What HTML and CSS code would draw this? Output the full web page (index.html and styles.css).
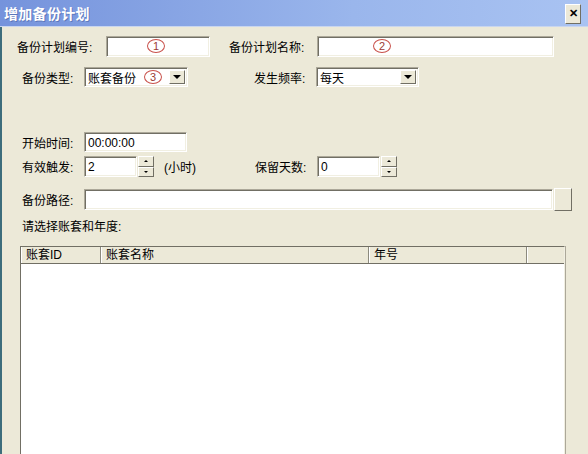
FILE: index.html
```html
<!DOCTYPE html>
<html lang="zh-CN">
<head>
  <meta charset="UTF-8">
  <title>增加备份计划</title>
  <link rel="stylesheet" href="styles.css">
</head>
<body>
  <div class="dialog">
    <div class="titlebar">
      <span class="title">增加备份计划</span>
      <span class="close-btn">&#x2715;</span>
    </div>

    <div class="form">
      <!-- row 1 -->
      <div class="row row-1">
        <span class="label w89">备份计划编号:</span>
        <div class="field w104"><span class="mark">1</span></div>
        <span class="label w88 ml19">备份计划名称:</span>
        <div class="field w237"><span class="mark mark-2">2</span></div>
      </div>

      <!-- row 2 -->
      <div class="row row-2">
        <span class="label w62">备份类型:</span>
        <div class="field combo w104">
          <span class="value">账套备份</span>
          <span class="mark mark-3">3</span>
          <span class="drop"><span class="tri"></span></span>
        </div>
        <span class="label w62 ml66">发生频率:</span>
        <div class="field combo w103">
          <span class="value">每天</span>
          <span class="drop"><span class="tri"></span></span>
        </div>
      </div>

      <!-- row 3 -->
      <div class="row row-3">
        <span class="label w62">开始时间:</span>
        <div class="field w103"><span class="value">00:00:00</span></div>
      </div>

      <!-- row 4 -->
      <div class="row row-4">
        <span class="label w62">有效触发:</span>
        <div class="field w53"><span class="value">2</span></div>
        <div class="spin">
          <span class="spin-btn"><span class="tri up"></span></span>
          <span class="spin-btn"><span class="tri"></span></span>
        </div>
        <span class="label ml10 w91">(小时)</span>
        <span class="label w62">保留天数:</span>
        <div class="field w63"><span class="value">0</span></div>
        <div class="spin">
          <span class="spin-btn"><span class="tri up"></span></span>
          <span class="spin-btn"><span class="tri"></span></span>
        </div>
      </div>

      <!-- row 5 -->
      <div class="row row-5">
        <span class="label w62">备份路径:</span>
        <div class="field w469"></div>
        <span class="browse"></span>
      </div>

      <div class="row row-6">
        <span class="label">请选择账套和年度:</span>
      </div>

      <div class="list">
        <div class="list-head">
          <span class="col c1">账套ID</span>
          <span class="col c2">账套名称</span>
          <span class="col c3">年号</span>
          <span class="col c4"></span>
        </div>
        <div class="list-body"></div>
      </div>
    </div>
  </div>
</body>
</html>
```

FILE: styles.css
```css
body {
  margin: 0;
  padding: 0;
  background: #ece9d8;
  font-family: "Liberation Sans", "Noto Sans CJK SC", sans-serif;
  font-size: 12px;
  color: #000;
}

.dialog {
  width: 588px;
  height: 454px;
  overflow: hidden;
  background: #ece9d8;
}

/* Title bar */
.titlebar {
  height: 27px;
  display: flex;
  align-items: center;
  justify-content: space-between;
  background: linear-gradient(to right, #7593dc, #9ab6ec 60%, #a9c3f2);
  border-bottom: 1px solid #c9d6ef;
  box-sizing: border-box;
  padding: 0 7px 0 4px;
}

.title {
  color: #fff;
  font-weight: bold;
  font-size: 14px;
  letter-spacing: 0.3px;
  text-shadow: 1px 1px 0 rgba(40, 60, 120, 0.35);
}

.close-btn {
  width: 16px;
  height: 20px;
  box-sizing: border-box;
  display: flex;
  align-items: center;
  justify-content: center;
  background: #ece9d8;
  border: 1px solid;
  border-color: #fff #716f64 #716f64 #fff;
  font-size: 11px;
  font-weight: bold;
  margin-top: 1px;
}

/* Form */
.form {
  border-left: 2px solid #3d6d7c;
  height: 427px;
  box-sizing: border-box;
  padding-top: 9px;
}

.row {
  display: flex;
  align-items: center;
  height: 21px;
  margin-left: 20px;
}

.row-1 { margin-left: 15px; }
.row-2 { margin-top: 10px; height: 20px; }
.row-3 { margin-top: 45px; height: 20px; }
.row-4 { margin-top: 4px; }
.row-5 { margin-top: 12px; }
.row-6 { margin-top: 7px; height: 16px; }

.label {
  white-space: nowrap;
  flex-shrink: 0;
}

.w53 { width: 53px; }
.w62 { width: 62px; }
.w63 { width: 63px; }
.w88 { width: 88px; }
.w89 { width: 89px; }
.w91 { width: 91px; }
.w103 { width: 103px; }
.w104 { width: 104px; }
.w237 { width: 237px; }
.w469 { width: 469px; }
.ml10 { margin-left: 10px; }
.ml19 { margin-left: 19px; }
.ml66 { margin-left: 66px; }

.field {
  position: relative;
  height: 100%;
  box-sizing: border-box;
  background: #fff;
  border: 1px solid;
  border-color: #aca899 #fff #fff #aca899;
  box-shadow: inset 1px 1px 0 #716f64, inset -1px -1px 0 #f1efe2;
  display: flex;
  align-items: center;
  flex-shrink: 0;
}

.value {
  padding-left: 3px;
  padding-top: 1px;
}

.combo .drop {
  position: absolute;
  right: 2px;
  top: 2px;
  bottom: 2px;
  width: 16px;
  box-sizing: border-box;
  background: #ece9d8;
  border: 1px solid;
  border-color: #fff #716f64 #716f64 #fff;
  display: flex;
  align-items: center;
  justify-content: center;
}

.tri {
  width: 0;
  height: 0;
  border-left: 4px solid transparent;
  border-right: 4px solid transparent;
  border-top: 4px solid #000;
}

.tri.up {
  border-top: none;
  border-bottom: 4px solid #000;
}

.spin .tri {
  border-left-width: 2px;
  border-right-width: 2px;
  border-top-width: 2px;
}

.spin .tri.up {
  border-bottom-width: 2px;
}

/* Red annotation circles */
.mark {
  position: absolute;
  left: 40px;
  top: 2px;
  width: 18px;
  height: 14px;
  box-sizing: border-box;
  border: 1px solid #c8504a;
  border-radius: 50%;
  color: #9a3a36;
  font-size: 11px;
  line-height: 12px;
  text-align: center;
}

.mark-2 { left: 55px; }
.mark-3 { left: 59px; top: 2px; }

/* Spinner */
.spin {
  display: flex;
  flex-direction: column;
  width: 16px;
  height: 21px;
  margin-left: 1px;
  flex-shrink: 0;
}

.spin-btn {
  flex: 1;
  background: #ece9d8;
  border: 1px solid;
  border-color: #fff #716f64 #716f64 #fff;
  display: flex;
  align-items: center;
  justify-content: center;
}

.browse {
  width: 18px;
  height: 23px;
  box-sizing: border-box;
  background: #ece9d8;
  border: 1px solid;
  border-color: #fff #716f64 #716f64 #fff;
  margin-left: 1px;
}

/* Account list */
.list {
  margin: 13px 0 0 18px;
  width: 545px;
  height: 220px;
  box-sizing: border-box;
  background: #fff;
  border: 1px solid;
  border-color: #716f64 #f1efe2 #f1efe2 #716f64;
  box-shadow: 1px 0 0 #aca899;
}

.list-head {
  display: flex;
  height: 16px;
  background: #ece9d8;
  border-bottom: 1px solid #716f64;
}

.col {
  box-sizing: border-box;
  height: 100%;
  padding-left: 4px;
  line-height: 16px;
  border-right: 1px solid #8c8a7e;
  border-left: 1px solid #fff;
  white-space: nowrap;
}

.c1 { width: 80px; }
.c2 { width: 268px; }
.c3 { width: 158px; }
.c4 { flex: 1; border-right: none; }
```
